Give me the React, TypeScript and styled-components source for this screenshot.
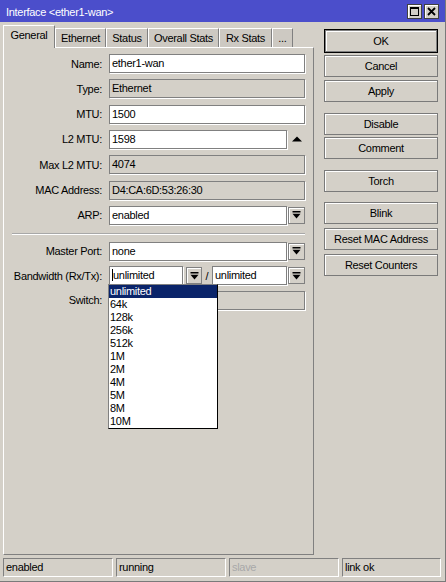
import React from 'react';
import styled, { createGlobalStyle } from 'styled-components';

const GlobalStyle = createGlobalStyle`
  * { box-sizing: border-box; }
  html, body { margin: 0; padding: 0; background: #d4d0c8; }
  body {
    font-family: "Liberation Sans", Arial, sans-serif;
    font-size: 11px;
    letter-spacing: -0.3px;
    color: #000;
  }
`;

const Window = styled.div`
  width: 446px;
  height: 582px;
  display: flex;
  flex-direction: column;
  background: #d4d0c8;
  border-right: 1px solid #7a7a7a;
  border-bottom: 1px solid #7a7a7a;
  overflow: hidden;
`;

const TitleBar = styled.div`
  height: 22px;
  flex: none;
  display: flex;
  align-items: center;
  padding: 0 6px 0 6px;
  background: #4b4ecb;
  color: #fff;
`;

const TitleText = styled.div`
  flex: 1;
  line-height: 22px;
  padding-top: 1px;
  white-space: nowrap;
`;

const TitleButtons = styled.div`
  display: flex;
  gap: 2px;
  margin-top: 1px;
`;

const TitleButton = styled.div`
  width: 15px;
  height: 15px;
  border: 1px solid #404040;
  background: #d4d0c8;
  box-shadow: inset 1px 1px 0 #fff;
  display: flex;
  align-items: center;
  justify-content: center;
`;

const Body = styled.div`
  flex: none;
  height: 533px;
  display: flex;
  padding-left: 3px;
`;

const LeftColumn = styled.div`
  width: 311px;
  display: flex;
  flex-direction: column;
`;

const TabStrip = styled.div`
  height: 25px;
  display: flex;
  align-items: flex-end;
  position: relative;
  z-index: 1;
`;

const Tab = styled.div<{ $w: number; $active?: boolean }>`
  width: ${p => p.$w}px;
  flex: none;
  height: ${p => (p.$active ? 23 : 19)}px;
  margin-bottom: ${p => (p.$active ? -1 : 0)}px;
  background: ${p => (p.$active ? '#d4d0c8' : '#cdc9c2')};
  border-top: 1px solid #fff;
  border-left: 1px solid #fff;
  border-right: 1px solid #808080;
  text-align: center;
  line-height: ${p => (p.$active ? 19 : 18)}px;
  white-space: nowrap;
`;

const Panel = styled.div`
  height: 508px;
  border-top: 1px solid #fff;
  border-left: 1px solid #fff;
  border-right: 1px solid #808080;
  border-bottom: 1px solid #808080;
  padding: 6px 8px 0 0;
`;

const FieldGroup = styled.div<{ $gap: number }>`
  display: flex;
  flex-direction: column;
  gap: ${p => p.$gap}px;
`;

const Row = styled.div`
  display: grid;
  grid-template-columns: 98px 1fr;
  column-gap: 7px;
  align-items: center;
  height: 19px;
`;

const Label = styled.div`
  text-align: right;
  white-space: nowrap;
`;

const Line = styled.div`
  display: flex;
  align-items: center;
  height: 19px;
`;

const TextBox = styled.div<{ $disabled?: boolean; $w?: number }>`
  ${p => (p.$w ? `width: ${p.$w}px; flex: none;` : 'flex: 1;')}
  height: 19px;
  border: 1px solid #808080;
  box-shadow: 1px 1px 0 #fff;
  background: ${p => (p.$disabled ? '#d4d0c8' : '#fff')};
  padding: 0 2px;
  line-height: 17px;
  white-space: nowrap;
  overflow: hidden;
`;

const DropButton = styled.div<{ $w: number; $ml: number }>`
  width: ${p => p.$w}px;
  height: 17px;
  flex: none;
  margin-left: ${p => p.$ml}px;
  border: 1px solid #808080;
  background: #d4d0c8;
  box-shadow: inset 1px 1px 0 #fff;
  display: flex;
  align-items: center;
  justify-content: center;
`;

const SpinArea = styled.div`
  flex: 1;
  display: flex;
  align-items: center;
  justify-content: center;
  padding-left: 2px;
`;

const Separator = styled.div`
  height: 2px;
  margin: 8px 0 7px 8px;
  border-top: 1px solid #a8a8a8;
  border-bottom: 1px solid #fff;
`;

const BandCell = styled.div`
  position: relative;
  display: flex;
  align-items: center;
  height: 19px;
`;

const Slash = styled.div`
  width: 10px;
  flex: none;
  text-align: center;
`;

const Caret = styled.span`
  display: inline-block;
  width: 1px;
  height: 12px;
  background: #000;
  vertical-align: -2px;
`;

const DropList = styled.div`
  position: absolute;
  top: 18px;
  left: -1px;
  width: 110px;
  background: #fff;
  border: 1px solid #000;
  border-left-color: #808080;
  border-top-color: #808080;
  z-index: 5;
`;

const DropItem = styled.div<{ $selected?: boolean }>`
  height: 13px;
  line-height: 13px;
  padding-left: 1px;
  background: ${p => (p.$selected ? '#0a246a' : 'transparent')};
  color: ${p => (p.$selected ? '#fff' : '#000')};
  white-space: nowrap;
`;

const ActionColumn = styled.div`
  width: 114px;
  margin-left: 10px;
  padding-top: 7px;
  display: flex;
  flex-direction: column;
`;

const ActionButton = styled.div<{ $mt: number; $default?: boolean }>`
  height: ${p => (p.$default ? 24 : 22)}px;
  margin-top: ${p => p.$mt}px;
  border: 1px solid ${p => (p.$default ? '#000' : '#7a7a7a')};
  box-shadow: ${p =>
    p.$default
      ? 'inset 0 0 0 1px #808080, inset 2px 2px 0 0 #fff'
      : 'inset 1px 1px 0 #fff'};
  display: flex;
  align-items: center;
  justify-content: center;
  white-space: nowrap;
`;

const StatusBar = styled.div`
  flex: none;
  display: flex;
  gap: 3px;
  margin-top: 3px;
  padding: 0 4px 0 3px;
  height: 19px;
`;

const StatusCell = styled.div<{ $w?: number; $dim?: boolean }>`
  ${p => (p.$w ? `width: ${p.$w}px; flex: none;` : 'flex: 1;')}
  height: 19px;
  border: 1px solid;
  border-color: #808080 #fff #fff #808080;
  padding: 0 2px;
  line-height: 17px;
  color: ${p => (p.$dim ? '#a8a8a8' : '#000')};
  white-space: nowrap;
  overflow: hidden;
`;

const DownIcon = () => (
  <svg width="9" height="8" viewBox="0 0 9 8">
    <rect x="0.5" y="0" width="8" height="1.5" fill="#000" />
    <polygon points="0.5,2.8 8.5,2.8 4.5,7.5" fill="#000" />
  </svg>
);

const UpIcon = () => (
  <svg width="10" height="6" viewBox="0 0 10 6">
    <polygon points="0,5.5 10,5.5 5,0.5" fill="#000" />
  </svg>
);

const MaxIcon = () => (
  <svg width="9" height="9" viewBox="0 0 9 9">
    <rect x="0.5" y="0.5" width="8" height="8" fill="none" stroke="#000" strokeWidth="1" />
    <rect x="0.5" y="0.5" width="8" height="1.5" fill="#000" />
  </svg>
);

const CloseIcon = () => (
  <svg width="9" height="9" viewBox="0 0 9 9">
    <path d="M1 1 L8 8 M8 1 L1 8" stroke="#000" strokeWidth="1.8" />
  </svg>
);

const tabs: { label: string; w: number }[] = [
  { label: 'General', w: 52 },
  { label: 'Ethernet', w: 51 },
  { label: 'Status', w: 42 },
  { label: 'Overall Stats', w: 71 },
  { label: 'Rx Stats', w: 53 },
  { label: '...', w: 21 },
];

const options = ['unlimited', '64k', '128k', '256k', '512k', '1M', '2M', '4M', '5M', '8M', '10M'];

const actions: { label: string; mt: number; def?: boolean }[] = [
  { label: 'OK', mt: 0, def: true },
  { label: 'Cancel', mt: 2 },
  { label: 'Apply', mt: 3 },
  { label: 'Disable', mt: 11 },
  { label: 'Comment', mt: 2 },
  { label: 'Torch', mt: 11 },
  { label: 'Blink', mt: 10 },
  { label: 'Reset MAC Address', mt: 4 },
  { label: 'Reset Counters', mt: 4 },
];

export default function App() {
  return (
    <>
      <GlobalStyle />
      <Window>
        <TitleBar>
          <TitleText>Interface &lt;ether1-wan&gt;</TitleText>
          <TitleButtons>
            <TitleButton>
              <MaxIcon />
            </TitleButton>
            <TitleButton>
              <CloseIcon />
            </TitleButton>
          </TitleButtons>
        </TitleBar>
        <Body>
          <LeftColumn>
            <TabStrip>
              {tabs.map((t, i) => (
                <Tab key={t.label} $w={t.w} $active={i === 0}>
                  {t.label}
                </Tab>
              ))}
            </TabStrip>
            <Panel>
              <FieldGroup $gap={6.33}>
                <Row>
                  <Label>Name:</Label>
                  <Line>
                    <TextBox>ether1-wan</TextBox>
                  </Line>
                </Row>
                <Row>
                  <Label>Type:</Label>
                  <Line>
                    <TextBox $disabled>Ethernet</TextBox>
                  </Line>
                </Row>
                <Row>
                  <Label>MTU:</Label>
                  <Line>
                    <TextBox>1500</TextBox>
                  </Line>
                </Row>
                <Row>
                  <Label>L2 MTU:</Label>
                  <Line>
                    <TextBox $w={178}>1598</TextBox>
                    <SpinArea>
                      <UpIcon />
                    </SpinArea>
                  </Line>
                </Row>
                <Row>
                  <Label>Max L2 MTU:</Label>
                  <Line>
                    <TextBox $disabled>4074</TextBox>
                  </Line>
                </Row>
                <Row>
                  <Label>MAC Address:</Label>
                  <Line>
                    <TextBox $disabled>D4:CA:6D:53:26:30</TextBox>
                  </Line>
                </Row>
                <Row>
                  <Label>ARP:</Label>
                  <Line>
                    <TextBox $w={178}>enabled</TextBox>
                    <DropButton $w={17} $ml={1}>
                      <DownIcon />
                    </DropButton>
                  </Line>
                </Row>
              </FieldGroup>
              <Separator />
              <FieldGroup $gap={5.5}>
                <Row>
                  <Label>Master Port:</Label>
                  <Line>
                    <TextBox $w={178}>none</TextBox>
                    <DropButton $w={17} $ml={1}>
                      <DownIcon />
                    </DropButton>
                  </Line>
                </Row>
                <Row style={{ position: 'relative', zIndex: 2 }}>
                  <Label>Bandwidth (Rx/Tx):</Label>
                  <Line>
                    <BandCell>
                      <TextBox $w={74}>
                        <Caret />
                        unlimited
                      </TextBox>
                      <DropButton $w={16} $ml={3}>
                        <DownIcon />
                      </DropButton>
                      <DropList>
                        {options.map((o, i) => (
                          <DropItem key={o} $selected={i === 0}>
                            {o}
                          </DropItem>
                        ))}
                      </DropList>
                    </BandCell>
                    <Slash>/</Slash>
                    <TextBox $w={75}>unlimited</TextBox>
                    <DropButton $w={17} $ml={1}>
                      <DownIcon />
                    </DropButton>
                  </Line>
                </Row>
                <Row>
                  <Label>Switch:</Label>
                  <Line>
                    <TextBox $disabled></TextBox>
                  </Line>
                </Row>
              </FieldGroup>
            </Panel>
          </LeftColumn>
          <ActionColumn>
            {actions.map(a => (
              <ActionButton key={a.label} $mt={a.mt} $default={a.def}>
                {a.label}
              </ActionButton>
            ))}
          </ActionColumn>
        </Body>
        <StatusBar>
          <StatusCell $w={110}>enabled</StatusCell>
          <StatusCell $w={110}>running</StatusCell>
          <StatusCell $w={110} $dim>
            slave
          </StatusCell>
          <StatusCell>link ok</StatusCell>
        </StatusBar>
      </Window>
    </>
  );
}
